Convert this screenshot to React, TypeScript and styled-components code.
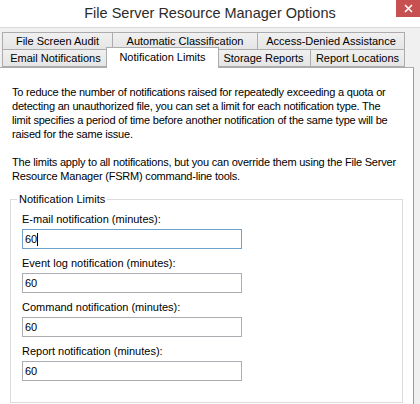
import React from "react";
import styled, { createGlobalStyle } from "styled-components";

const GlobalStyle = createGlobalStyle`
  * { box-sizing: border-box; }
  html, body { margin: 0; padding: 0; background: #f0f0f0; }
  body { font-family: "Liberation Sans", Arial, sans-serif; }
`;

const Window = styled.div`
  width: 420px;
  height: 404px;
  background: #f0f0f0;
  display: flex;
  flex-direction: column;
  overflow: hidden;
`;

const TitleBar = styled.div`
  height: 28px;
  flex: none;
  background: #ffffff;
  border-bottom: 1px solid #d9d9d9;
  display: grid;
  grid-template-columns: 1fr auto 1fr;
`;

const Title = styled.div`
  grid-column: 2;
  align-self: center;
  font-size: 14.5px;
  color: #2b2b2b;
  margin-top: -1px;
  white-space: nowrap;
`;

const CloseButton = styled.div`
  grid-column: 3;
  justify-self: end;
  align-self: start;
  width: 24px;
  height: 17px;
  background: #c75050;
  display: flex;
  align-items: center;
  justify-content: center;
`;

const TabStrip = styled.div`
  flex: none;
  padding: 4px 16px 0 2px;
  display: flex;
  flex-direction: column;
`;

const TabRow = styled.div<{ $front?: boolean }>`
  display: flex;
  height: 18px;
  margin-top: ${(p) => (p.$front ? "-1px" : "0")};
`;

const Tab = styled.div<{ $w: number; $active?: boolean }>`
  width: ${(p) => p.$w}px;
  flex: none;
  height: ${(p) => (p.$active ? 21 : 18)}px;
  margin-left: ${(p) => (p.$active ? -3 : -1)}px;
  margin-right: ${(p) => (p.$active ? -2 : 0)}px;
  margin-top: ${(p) => (p.$active ? -2 : 0)}px;
  border: 1px solid #acacac;
  border-bottom: ${(p) => (p.$active ? "none" : "1px solid #acacac")};
  background: ${(p) =>
    p.$active ? "#ffffff" : "linear-gradient(#f0f0f0, #e5e5e5)"};
  position: relative;
  z-index: ${(p) => (p.$active ? 2 : 1)};
  font-size: 11px;
  color: #000;
  display: flex;
  justify-content: center;
  padding-top: ${(p) => (p.$active ? 2 : 1)}px;
  line-height: 14px;
  white-space: nowrap;
  &:first-child { margin-left: 0; }
`;

const Panel = styled.div`
  flex: 1;
  background: #ffffff;
  border-top: 1px solid #acacac;
  border-right: 1px solid #9c9c9c;
  margin-right: 6px;
  padding: 17px 10px 0 10px;
  font-size: 11px;
  line-height: 14px;
  color: #000;
`;

const Para = styled.div`
  margin: 0 0 14px 2px;
  white-space: nowrap;
  letter-spacing: -0.2px;
`;

const Group = styled.fieldset`
  margin: -5px 0 0 0;
  border: 1px solid #dcdcdc;
  padding: 0 0 17px 11px;
  height: 211px;
`;

const Legend = styled.legend`
  padding: 0 2px;
  margin-left: -5px;
  font-size: 11px;
  line-height: 14px;
`;

const Field = styled.div`
  display: flex;
  flex-direction: column;
  margin-top: 6px;
  & + & { margin-top: 7px; }
`;

const Label = styled.div`
  height: 14px;
  margin-bottom: 3px;
`;

const Input = styled.div<{ $focused?: boolean }>`
  width: 220px;
  height: 20px;
  border: 1px solid ${(p) => (p.$focused ? "#6fa1cc" : "#abadb3")};
  background: #fff;
  padding: 2px 0 0 2px;
  display: flex;
  align-items: flex-start;
`;

const Caret = styled.span`
  display: inline-block;
  width: 1px;
  height: 13px;
  background: #000;
  margin-top: 1px;
`;

const fields = [
  "E-mail notification (minutes):",
  "Event log notification (minutes):",
  "Command notification (minutes):",
  "Report notification (minutes):",
];

export default function App() {
  return (
    <>
      <GlobalStyle />
      <Window>
        <TitleBar>
          <Title>File Server Resource Manager Options</Title>
          <CloseButton>
            <svg width="9" height="9" viewBox="0 0 9 9">
              <path d="M1 1 L8 8 M8 1 L1 8" stroke="#fff" strokeWidth="1.6" />
            </svg>
          </CloseButton>
        </TitleBar>
        <TabStrip>
          <TabRow>
            <Tab $w={111}>File Screen Audit</Tab>
            <Tab $w={146}>Automatic Classification</Tab>
            <Tab $w={148}>Access-Denied Assistance</Tab>
          </TabRow>
          <TabRow $front>
            <Tab $w={107}>Email Notifications</Tab>
            <Tab $w={113} $active>
              Notification Limits
            </Tab>
            <Tab $w={95}>Storage Reports</Tab>
            <Tab $w={95}>Report Locations</Tab>
          </TabRow>
        </TabStrip>
        <Panel>
          <Para>
            To reduce the number of notifications raised for repeatedly exceeding a quota or
            <br />
            detecting an unauthorized file, you can set a limit for each notification type. The
            <br />
            limit specifies a period of time before another notification of the same type will be
            <br />
            raised for the same issue.
          </Para>
          <Para>
            The limits apply to all notifications, but you can override them using the File Server
            <br />
            Resource Manager (FSRM) command-line tools.
          </Para>
          <Group>
            <Legend>Notification Limits</Legend>
            {fields.map((label, i) => (
              <Field key={label}>
                <Label>{label}</Label>
                <Input $focused={i === 0}>
                  60
                  {i === 0 && <Caret />}
                </Input>
              </Field>
            ))}
          </Group>
        </Panel>
      </Window>
    </>
  );
}
